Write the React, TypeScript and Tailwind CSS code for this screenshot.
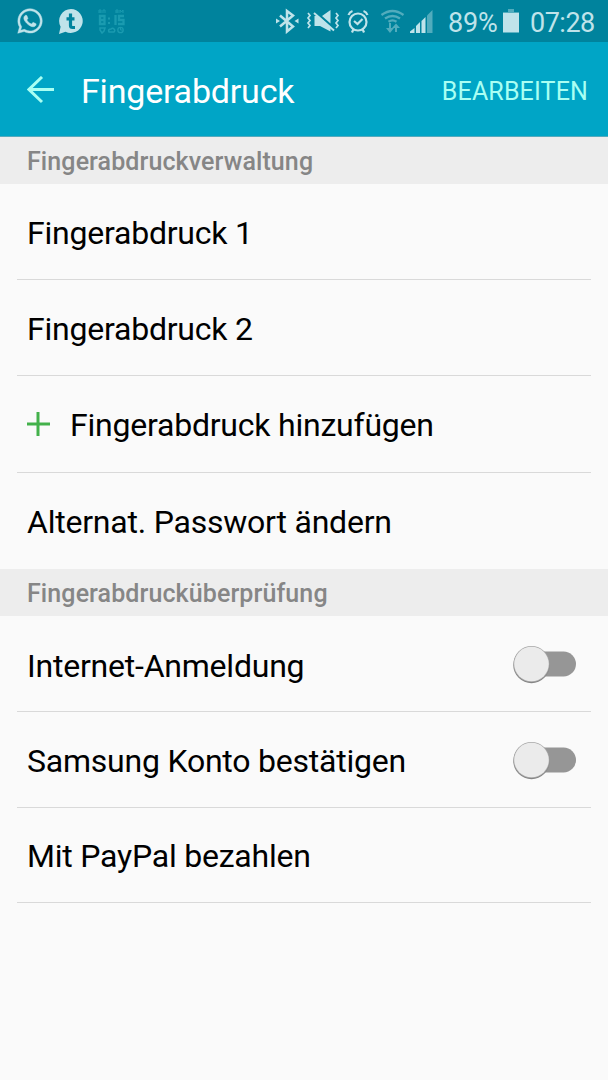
import type { ReactNode } from 'react';
import { FaWhatsapp } from 'react-icons/fa';

function StatusBar() {
  return (
    <div className="flex h-[42px] items-center bg-[#00839d] text-[#bfe3ea]">
      <FaWhatsapp className="ml-[16px] h-[28px] w-[28px]" stroke="currentColor" strokeWidth="8" />
      <svg className="ml-[13px] h-[27px] w-[27px]" viewBox="0 0 27 27">
        <path d="M14 1a12 12 0 1 1-5.500 22.800L2 26l1.600-7.200A12 12 0 0 1 14 1Z" fill="currentColor" />
        <path d="M13.500 5.500v12q0 2 2 2h2.500M9.500 10.800h8" fill="none" stroke="#00839d" strokeWidth="3.200" />
      </svg>
      <svg className="ml-[13px] h-[26px] w-[28px] text-[#1a9bb0]" viewBox="0 0 28 26" fill="none" stroke="currentColor">
        <path d="M2 5V2h2v3M2 4h2M6 5V2h2v3M19 5V2h2v3M19 4h2M23 5V2l1.500 2L26 2v3" strokeWidth="1" />
        <path d="M3 8h4.500v8H3ZM3 12h5M18.500 7v10M27 8h-5v4h4.500v4H21" strokeWidth="2.300" />
        <path d="M12 9.500v2M12 14v2" strokeWidth="2" />
        <path d="M3 20h5l-1 3-2 2-2-3ZM12 24c-1-2 0-3 2-3 2-2 5 1 3 3Z" strokeWidth="1.500" />
        <circle cx="23.500" cy="22" r="2.700" strokeWidth="1.300" />
        <path d="M23.500 20v2h2" />
      </svg>

      <svg className="ml-[150px] h-[26px] w-[25px]" viewBox="0 0 25 26" fill="none" stroke="currentColor" strokeWidth="2.500">
        <path d="m5 7.500 13 11-6 5V3l6 4.500-13 11" />
        <path d="m1 10.500 4 2.500-4 2.500ZM23.500 10.500l-4 2.500 4 2.500Z" fill="currentColor" stroke="none" />
      </svg>
      <svg className="ml-[6px] h-[26px] w-[34px]" viewBox="0 0 34 26" fill="none" stroke="currentColor">
        <path d="m2 5 2 2.500L2 10l2 2.500L2 15l2 2.500L2 20M30 5l2 2.500L30 10l2 2.500-2 2.500 2 2.500-2 2.500" strokeWidth="1.700" />
        <path d="M8.500 8h4l12 11v4.500L14 18H8.500ZM16 8l8.500-6v13.500Z" fill="currentColor" stroke="none" />
        <path d="m8 5 20 17.500" strokeWidth="2" />
      </svg>
      <svg className="ml-[7px] h-[26px] w-[22px]" viewBox="0 0 22 26" fill="none" stroke="currentColor" strokeWidth="2.200">
        <circle cx="11" cy="14" r="8.500" />
        <path d="m7 13 3.500 3 5-5M1.500 7q1-3 4-4M20.500 7q-1-3-4-4M6.500 21 5 24.500M15.500 21l1.500 3.500" />
      </svg>
      <svg className="ml-[11px] h-[26px] w-[25px] text-[#51acbd]" viewBox="0 0 25 26" fill="none" stroke="currentColor" strokeWidth="2.300">
        <path d="M1.500 7q11-8 22 0M5 10.500q7.500-5 15 0M8.500 13.700q4-2.600 8 0" />
        <path d="M10 15v7M16 24v-7" strokeWidth="2" />
        <path d="M6 20h8l-4 5ZM12 20h8l-4-4.500Z" fill="currentColor" stroke="none" />
      </svg>
      <svg className="ml-[5px] h-[26px] w-[24px]" viewBox="0 0 24 26">
        <path d="M0 25v-1.500l4.500-3.500v5ZM6 25v-7l4-4v11ZM11.500 25V13l4-4v16Z" fill="currentColor" />
        <path d="M17 25V7.500L22.500 2v23Z" fill="#51acbd" />
      </svg>
      <span className="ml-[14px] w-[51px] whitespace-nowrap pt-[3px] text-[27px] leading-[40px] tracking-[-0.2px]">89%</span>
      <svg className="ml-[4px] h-[26px] w-[16px]" viewBox="0 0 16 26">
        <path d="M5 1h6v3h5v2H0V4h5Z" fill="#51acbd" />
        <path d="M0 5h16v19.500H0Z" fill="currentColor" />
      </svg>
      <span className="ml-[11px] whitespace-nowrap pt-[3px] text-[27px] leading-[40px] tracking-[-0.5px]">07:28</span>
    </div>
  );
}

function Section({ children }: { children: ReactNode }) {
  return (
    <h2 className="h-[47px] bg-[#ededed] pl-[27px] text-[25px] leading-[50px] font-medium tracking-[0.1px] whitespace-nowrap text-[#868686]">
      {children}
    </h2>
  );
}

function Row({ children, height = 'h-[96px]', line = true }: { children: ReactNode; height?: string; line?: boolean }) {
  return (
    <div className={`mx-[17px] flex items-center pr-[14px] pl-[10px] text-[32px] tracking-[-0.22px] whitespace-nowrap text-black ${height} ${line ? 'border-b border-[#d9d9d9]' : ''}`}>
      {children}
    </div>
  );
}

function Switch() {
  return (
    <svg className="ml-auto h-[40px] w-[64px]" viewBox="0 0 64 40" role="switch" aria-checked="false">
      <rect x="18" y="7.500" width="45" height="25" rx="12.500" fill="#969696" />
      <circle cx="18.500" cy="21" r="18.200" fill="#858585" />
      <circle cx="18.500" cy="20" r="18" fill="#a9a9a9" />
      <circle cx="18.500" cy="20" r="17.300" fill="#ebebeb" />
    </svg>
  );
}

export default function App() {
  return (
    <div className="min-h-[1080px] w-[608px] overflow-hidden bg-[#fafafa] font-[Roboto,sans-serif]">
      <StatusBar />
      <header className="flex h-[95px] items-center border-b border-[#55aabd] bg-[#00a5c6] pr-[20px] pl-[27px] text-[#a9fff3]">
        <svg className="mt-[2px] h-[28px] w-[27px]" viewBox="0 0 27 28" fill="none" stroke="currentColor" strokeWidth="3">
          <path d="M27 13.500H2M15 1 2 13.500 15 26" />
        </svg>
        <h1 className="ml-[27px] pt-[3px] text-[34px] leading-[40px] tracking-[-0.2px] text-white">Fingerabdruck</h1>
        <button className="ml-auto pt-[5px] text-[25px] tracking-[0.15px]">BEARBEITEN</button>
      </header>
      <Section>Fingerabdruckverwaltung</Section>
      <Row><span className="pt-[3px]">Fingerabdruck 1</span></Row>
      <Row><span className="pt-[2px]">Fingerabdruck 2</span></Row>
      <Row height="h-[97px]">
        <svg className="h-[24px] w-[23px]" viewBox="0 0 23 24" stroke="#43b14b" strokeWidth="3">
          <path d="M0 12h23M11 0v24" />
        </svg>
        <span className="ml-[20px] pt-[2px]">Fingerabdruck hinzufügen</span>
      </Row>
      <Row line={false}><span className="pt-[2px]">Alternat. Passwort ändern</span></Row>
      <Section>Fingerabdrucküberprüfung</Section>
      <Row><span className="pt-[4px]">Internet-Anmeldung</span><Switch /></Row>
      <Row><span className="pt-[2px]">Samsung Konto bestätigen</span><Switch /></Row>
      <Row height="h-[95px]"><span className="pt-[2px]">Mit PayPal bezahlen</span></Row>
    </div>
  );
}
